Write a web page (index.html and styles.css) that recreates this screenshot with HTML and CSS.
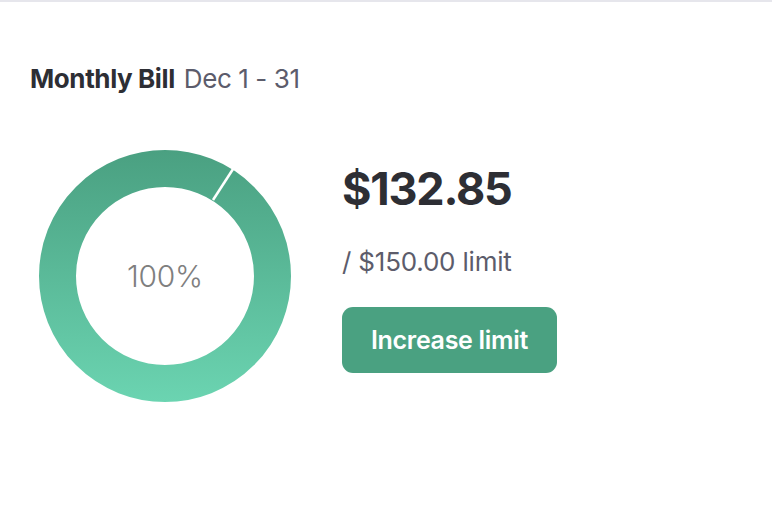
FILE: index.html
```html
<!DOCTYPE html>
<html>
<head>
<meta charset="utf-8">
<link rel="stylesheet" href="styles.css">
</head>
<body>
<div class="page">
  <h2 class="title"><span class="title-main">Monthly Bill</span><span class="title-range">Dec 1 - 31</span></h2>
  <div class="summary">
    <div class="donut">
      <svg width="252" height="252" viewBox="0 0 252 252">
        <defs>
          <linearGradient id="g" x1="0" y1="0" x2="0" y2="252" gradientUnits="userSpaceOnUse">
            <stop offset="0" stop-color="#4aa081"/>
            <stop offset="1" stop-color="#6bd4b1"/>
          </linearGradient>
        </defs>
        <circle cx="126" cy="126" r="107.5" fill="none" stroke="url(#g)" stroke-width="37"/>
        <line x1="174" y1="50" x2="196" y2="16" stroke="#fff" stroke-width="2.5"/>
      </svg>
      <span class="donut-label">100%</span>
    </div>
    <div class="info">
      <div class="amount">$132.85</div>
      <div class="limit">/ $150.00 limit</div>
      <button class="btn">Increase limit</button>
    </div>
  </div>
</div>
</body>
</html>
```
FILE: styles.css
```css
html, body {
  margin: 0;
  padding: 0;
  background: #fff;
}
body {
  font-family: Inter, "Helvetica Neue", Arial, sans-serif;
  color: #2d2e34;
  border-top: 2px solid #e6e6ec;
}
.page {
  padding: 60px 0 0 30px;
}
.title {
  margin: 0;
  font-size: 26px;
  line-height: 34px;
  display: flex;
  align-items: baseline;
  gap: 9px;
  letter-spacing: -0.4px;
}
.title-main {
  font-weight: 700;
  color: #2d2e34;
}
.title-range {
  font-weight: 400;
  color: #5c5c6b;
}
.summary {
  display: flex;
  align-items: flex-start;
  margin-top: 54px;
  margin-left: 9px;
  gap: 51px;
}
.donut {
  position: relative;
  width: 252px;
  height: 252px;
}
.donut svg {
  display: block;
}
.donut-label {
  position: absolute;
  inset: 0;
  display: flex;
  align-items: center;
  justify-content: center;
  font-size: 30px;
  font-weight: 300;
  color: #7f7f7f;
  letter-spacing: -0.3px;
}
.info {
  display: flex;
  flex-direction: column;
  align-items: flex-start;
  padding-top: 12px;
}
.amount {
  font-size: 45px;
  font-weight: 700;
  line-height: 54px;
  letter-spacing: -1.2px;
  color: #2d2e34;
}
.limit {
  margin-top: 31px;
  font-size: 26px;
  line-height: 30px;
  color: #5c5c6b;
  letter-spacing: -0.2px;
}
.btn {
  margin-top: 30px;
  width: 215px;
  height: 66px;
  border: none;
  border-radius: 11px;
  background: #4aa181;
  color: #fff;
  font-family: inherit;
  font-size: 25px;
  font-weight: 600;
  letter-spacing: -0.3px;
  padding: 0;
}
```
